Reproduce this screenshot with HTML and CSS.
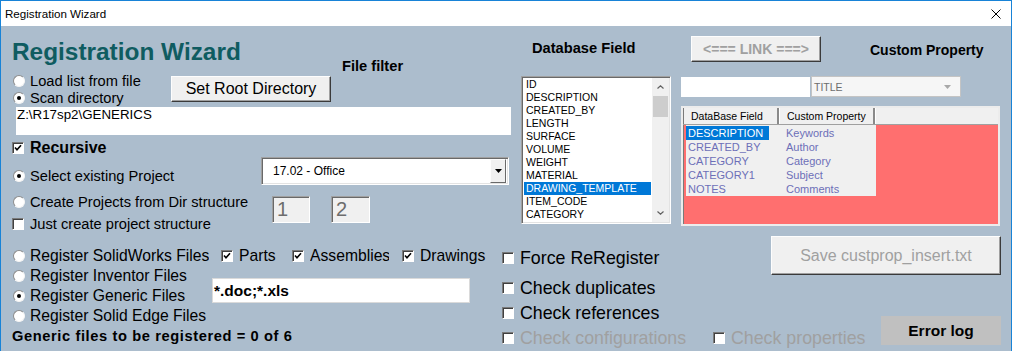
FILE: index.html
```html
<!DOCTYPE html>
<html lang="en">
<head>
    <meta charset="UTF-8">
    <title>Registration Wizard</title>
    <link rel="stylesheet" href="styles.css">
</head>
<body>

    <div class="window">

        <!-- title bar -->
        <div class="titlebar">
            <span class="title-text">Registration Wizard</span>
            <svg class="close" width="10" height="10" viewBox="0 0 10 10">
                <path d="M0.5 0.5 L9.5 9.5 M9.5 0.5 L0.5 9.5" stroke="#000" stroke-width="1"/>
            </svg>
        </div>

        <div class="form">

            <!-- upper part: source, database list, mapping -->
            <div class="top">

                <div class="col-left">
                    <div class="head-row">
                        <h1>Registration Wizard</h1>
                        <span class="label-bold filter-label">File filter</span>
                    </div>

                    <div class="source-row">
                        <div class="radio-group">
                            <label class="opt"><span class="radio"></span>Load list from file</label>
                            <label class="opt"><span class="radio on"></span>Scan directory</label>
                        </div>
                        <button class="btn btn-root">Set Root Directory</button>
                    </div>

                    <div class="path-box">Z:\R17sp2\GENERICS</div>

                    <label class="opt recursive"><span class="check on"><svg width="10" height="10" viewBox="0 0 10 10"><path d="M2 4.5 L4 6.8 L8 2.2" fill="none" stroke="#000" stroke-width="1.6"/></svg></span>Recursive</label>

                    <div class="project-row">
                        <label class="opt"><span class="radio on"></span>Select existing Project</label>
                        <div class="combo">
                            <span class="combo-text">17.02 - Office</span>
                            <span class="combo-btn"><svg width="7" height="4" viewBox="0 0 7 4"><path d="M0 0 H7 L3.5 4 Z" fill="#000"/></svg></span>
                        </div>
                    </div>

                    <div class="create-row">
                        <label class="opt"><span class="radio"></span>Create Projects from Dir structure</label>
                        <div class="numbox">1</div>
                        <div class="numbox numbox-second">2</div>
                    </div>

                    <label class="opt"><span class="check"></span>Just create project structure</label>
                </div>

                <div class="col-db">
                    <div class="label-bold db-label">Database Field</div>
                    <div class="listbox">
                        <ul class="list-items">
                            <li>ID</li>
                            <li>DESCRIPTION</li>
                            <li>CREATED_BY</li>
                            <li>LENGTH</li>
                            <li>SURFACE</li>
                            <li>VOLUME</li>
                            <li>WEIGHT</li>
                            <li>MATERIAL</li>
                            <li class="selected">DRAWING_TEMPLATE</li>
                            <li>ITEM_CODE</li>
                            <li>CATEGORY</li>
                        </ul>
                        <div class="scrollbar">
                            <div class="scroll-arrow"><svg width="7" height="4" viewBox="0 0 7 4"><path d="M0.5 3.5 L3.5 0.8 L6.5 3.5" fill="none" stroke="#606060" stroke-width="1.2"/></svg></div>
                            <div class="scroll-thumb"></div>
                            <div class="scroll-arrow scroll-down"><svg width="7" height="4" viewBox="0 0 7 4"><path d="M0.5 0.5 L3.5 3.2 L6.5 0.5" fill="none" stroke="#606060" stroke-width="1.2"/></svg></div>
                        </div>
                    </div>
                </div>

                <div class="col-right">
                    <div class="link-row">
                        <button class="btn btn-link">&lt;=== LINK ===&gt;</button>
                        <span class="label-bold custom-label">Custom Property</span>
                    </div>

                    <div class="map-row">
                        <div class="text-input"></div>
                        <div class="combo-flat">
                            <span>TITLE</span>
                            <svg width="7" height="4" viewBox="0 0 7 4"><path d="M0 0 H7 L3.5 4 Z" fill="#a8a8a8"/></svg>
                        </div>
                    </div>

                    <div class="listview">
                        <div class="lv-header">
                            <div class="lv-col lv-col-first">DataBase Field</div>
                            <div class="lv-col">Custom Property</div>
                            <div class="lv-col lv-col-rest"></div>
                        </div>
                        <div class="lv-body">
                            <div class="lv-row"><span class="lv-cell"><span class="lv-text selected">DESCRIPTION</span></span><span class="lv-cell lv-cell-second">Keywords</span></div>
                            <div class="lv-row"><span class="lv-cell"><span class="lv-text">CREATED_BY</span></span><span class="lv-cell lv-cell-second">Author</span></div>
                            <div class="lv-row"><span class="lv-cell"><span class="lv-text">CATEGORY</span></span><span class="lv-cell lv-cell-second">Category</span></div>
                            <div class="lv-row"><span class="lv-cell"><span class="lv-text">CATEGORY1</span></span><span class="lv-cell lv-cell-second">Subject</span></div>
                            <div class="lv-row"><span class="lv-cell"><span class="lv-text">NOTES</span></span><span class="lv-cell lv-cell-second">Comments</span></div>
                        </div>
                    </div>
                </div>
            </div>

            <!-- lower part: file types, options, actions -->
            <div class="bottom">

                <div class="col-register">
                    <div class="register-grid">
                        <div class="radio-stack">
                            <label class="opt big"><span class="radio"></span><span class="clip">Register SolidWorks Files</span></label>
                            <label class="opt big"><span class="radio"></span><span class="clip">Register Inventor Files</span></label>
                            <label class="opt big"><span class="radio on"></span><span class="clip">Register Generic Files</span></label>
                            <label class="opt big"><span class="radio"></span><span class="clip">Register Solid Edge Files</span></label>
                        </div>
                        <div class="types">
                            <div class="type-checks">
                                <label class="opt big type-parts"><span class="check on"><svg width="10" height="10" viewBox="0 0 10 10"><path d="M2 4.5 L4 6.8 L8 2.2" fill="none" stroke="#000" stroke-width="1.6"/></svg></span>Parts</label>
                                <label class="opt big type-asm"><span class="check on"><svg width="10" height="10" viewBox="0 0 10 10"><path d="M2 4.5 L4 6.8 L8 2.2" fill="none" stroke="#000" stroke-width="1.6"/></svg></span><span class="clip">Assemblies</span></label>
                                <label class="opt big"><span class="check on"><svg width="10" height="10" viewBox="0 0 10 10"><path d="M2 4.5 L4 6.8 L8 2.2" fill="none" stroke="#000" stroke-width="1.6"/></svg></span>Drawings</label>
                            </div>
                            <div class="filter-input">*.doc;*.xls</div>
                        </div>
                    </div>
                    <div class="summary">Generic files to be registered = 0 of 6</div>
                </div>

                <div class="col-checks">
                    <label class="opt strong"><span class="check"></span>Force ReRegister</label>
                    <label class="opt strong row-dup"><span class="check"></span>Check duplicates</label>
                    <label class="opt strong row-ref"><span class="check"></span>Check references</label>
                    <div class="check-pair">
                        <label class="opt strong disabled pair-first"><span class="check"></span>Check configurations</label>
                        <label class="opt strong disabled"><span class="check"></span>Check properties</label>
                    </div>
                </div>

                <div class="col-actions">
                    <button class="btn btn-save">Save custprop_insert.txt</button>
                    <button class="btn-error">Error log</button>
                </div>
            </div>
        </div>
    </div>

</body>
</html>
```

FILE: styles.css
```css
* {
    box-sizing: border-box;
}

body {
    margin: 0;
    background: #fff;
    font-family: "Liberation Sans", Arial, sans-serif;
    color: #000;
}

.window {
    width: 1012px;
    height: 351px;
    border: 1px solid #1883d7;
    border-bottom: none;
    background: #acbdcd;
    overflow: hidden;
    display: flex;
    flex-direction: column;
}

/* title bar */
.titlebar {
    height: 25px;
    flex-shrink: 0;
    background: #fff;
    display: flex;
    align-items: center;
    justify-content: space-between;
    padding: 0 10px 0 4px;
}

.title-text {
    font-size: 11.6px;
}

.close {
    display: block;
}

.form {
    flex: 1;
    padding-left: 11px;
}

/* shared controls */
.opt {
    display: flex;
    align-items: center;
    height: 17px;
    font-size: 14.67px;
    white-space: nowrap;
}

.radio {
    position: relative;
    flex-shrink: 0;
    width: 12px;
    height: 12px;
    margin: 0 5px 0 1px;
    border-radius: 50%;
    background: #fff;
    border: 1px solid;
    border-color: #8c8c8c #f4f4f4 #f4f4f4 #8c8c8c;
}

.radio.on::after {
    content: "";
    position: absolute;
    left: 3px;
    top: 3px;
    width: 4px;
    height: 4px;
    border-radius: 50%;
    background: #000;
}

.check {
    flex-shrink: 0;
    width: 12px;
    height: 12px;
    margin-right: 6px;
    background: #fff;
    border: 1px solid;
    border-color: #7a7a7a #fff #fff #7a7a7a;
    box-shadow: inset 1px 1px 0 #404040;
    display: flex;
    align-items: center;
    justify-content: center;
}

.check svg {
    display: block;
}

.label-bold {
    font-weight: bold;
    font-size: 14.67px;
    line-height: 17px;
    white-space: nowrap;
}

.btn {
    font-family: inherit;
    color: #000;
    background: #f0f0f0;
    border: 1px solid;
    border-color: #fdfdfd #3a3a3a #3a3a3a #fdfdfd;
    box-shadow: inset -1px -1px 0 #a0a0a0;
    padding: 0;
}

/* upper part */
.top {
    display: grid;
    grid-template-columns: 499px 150px 320px;
    column-gap: 10px;
    height: 210px;
}

.head-row {
    display: flex;
    margin-top: 12px;
    height: 34px;
}

h1 {
    margin: 0;
    flex: 0 0 330px;
    font-size: 24.4px;
    line-height: 28px;
    font-weight: bold;
    color: #0f5c61;
}

.filter-label {
    margin-top: 20px;
}

.source-row {
    display: flex;
    height: 34px;
}

.radio-group {
    width: 159px;
}

.btn-root {
    margin-top: 4px;
    width: 160px;
    height: 26px;
    font-size: 16px;
}

.path-box {
    margin: 1px 0 0 4px;
    width: 495px;
    height: 28px;
    padding-left: 1px;
    background: #fff;
    font-size: 13.33px;
    line-height: 16px;
}

.recursive {
    margin-top: 4px;
    height: 18px;
    font-size: 16px;
    font-weight: bold;
}

.project-row {
    display: flex;
    height: 32px;
}

.project-row .opt {
    width: 249px;
    margin-top: 10px;
}

.combo {
    width: 248px;
    height: 28px;
    display: flex;
    align-items: center;
    justify-content: space-between;
    background: #fff;
    border: 1px solid;
    border-color: #a0a0a0 #fff #fff #a0a0a0;
    box-shadow: inset 1px 1px 0 #696969, inset -1px -1px 0 #e3e3e3;
    padding: 1px 2px 1px 11px;
}

.combo-text {
    font-size: 12px;
}

.combo-btn {
    width: 16px;
    height: 24px;
    display: flex;
    align-items: center;
    justify-content: center;
    background: #f0f0f0;
    border: 1px solid;
    border-color: #fdfdfd #696969 #696969 #fdfdfd;
}

.combo-btn svg {
    display: block;
}

.create-row {
    display: flex;
    height: 22px;
    margin-top: 4px;
}

.create-row .opt {
    width: 260px;
}

.numbox {
    margin-top: 3px;
    width: 38px;
    height: 27px;
    padding-left: 4px;
    background: #f0f0f0;
    border: 1px solid;
    border-color: #a0a0a0 #fff #fff #a0a0a0;
    box-shadow: inset 1px 1px 0 #696969;
    color: #6d6d6d;
    font-size: 20px;
    line-height: 25px;
}

.numbox-second {
    margin-left: 21px;
    width: 39px;
}

/* database field list */
.db-label {
    height: 50px;
    padding: 14px 0 0 11px;
}

.listbox {
    height: 148px;
    display: flex;
    background: #fff;
    border: 1px solid;
    border-color: #a0a0a0 #fff #fff #a0a0a0;
    box-shadow: inset 1px 1px 0 #696969, inset -1px -1px 0 #e3e3e3;
    padding: 1px;
}

.list-items {
    list-style: none;
    margin: 0;
    padding: 0 0 0 1px;
    flex: 1;
    overflow: hidden;
    font-size: 10.5px;
    line-height: 13px;
}

.list-items li {
    padding-left: 2px;
    margin-right: 1px;
    white-space: nowrap;
}

.list-items .selected {
    background: #0078d7;
    color: #fff;
}

.scrollbar {
    width: 17px;
    background: #f0f0f0;
    display: flex;
    flex-direction: column;
}

.scroll-arrow {
    height: 18px;
    display: flex;
    align-items: center;
    justify-content: center;
}

.scroll-arrow svg {
    display: block;
}

.scroll-thumb {
    height: 21px;
    margin: 0 1px;
    background: #cdcdcd;
}

.scroll-down {
    margin-top: auto;
}

/* custom property mapping */
.link-row {
    display: flex;
    align-items: flex-start;
    height: 50px;
}

.btn-link {
    margin: 10px 0 0 10px;
    width: 130px;
    height: 26px;
    font-size: 14px;
    font-weight: bold;
    color: #a0a0a0;
}

.custom-label {
    margin: 16px 0 0 49px;
    font-size: 14px;
}

.map-row {
    display: flex;
    height: 21px;
}

.text-input {
    margin-top: 1px;
    width: 129px;
    height: 20px;
    background: #fff;
}

.combo-flat {
    margin-left: 1px;
    width: 150px;
    height: 21px;
    display: flex;
    align-items: center;
    justify-content: space-between;
    padding: 0 9px 0 2px;
    background: #f6f6f6;
    border: 1px solid #c4c4c4;
    color: #6d6d6d;
    font-size: 10.5px;
}

.combo-flat svg {
    display: block;
}

.listview {
    margin-top: 9px;
    width: 319px;
    height: 120px;
    background: #ff6f6f;
    border: 2px solid #ececec;
    box-shadow: inset 1px 1px 0 #7a7a7a;
}

.lv-header {
    display: flex;
    height: 17px;
    background: #f0f0f0;
    font-size: 10.5px;
    line-height: 16px;
    border-bottom: 1px solid #a0a0a0;
}

.lv-col {
    width: 96px;
    padding-left: 7px;
    border-right: 2px solid #8a8a8a;
    border-left: 1px solid #fff;
    white-space: nowrap;
}

.lv-col-first {
    border-left: 1px solid #7a7a7a;
}

.lv-col-rest {
    flex: 1;
    border-right: none;
}

.lv-body {
    margin-left: 3px;
    width: 190px;
    height: 71px;
    padding-top: 1px;
    background: #f0f0f0;
    font-size: 11px;
    color: #6d6fb8;
}

.lv-row {
    display: flex;
    height: 14px;
    line-height: 14px;
}

.lv-cell {
    width: 93px;
    white-space: nowrap;
}

.lv-text {
    display: inline-block;
    padding: 0 6px 0 2px;
}

.lv-text.selected {
    background: #0078d7;
    color: #fff;
}

.lv-cell-second {
    padding-left: 7px;
}

/* lower part */
.bottom {
    display: flex;
    height: 115px;
}

.col-register {
    width: 489px;
    padding-top: 10px;
}

.register-grid {
    display: flex;
}

.radio-stack {
    width: 197px;
}

.opt.big {
    height: 20px;
    font-size: 15.7px;
}

.clip {
    overflow: hidden;
}

.types {
    margin-left: 3px;
}

.type-checks {
    display: flex;
    height: 20px;
    padding-left: 9px;
}

.type-parts {
    width: 71px;
}

.type-asm {
    width: 110px;
}

.type-asm .clip {
    width: 79px;
}

.filter-input {
    margin-top: 12px;
    width: 258px;
    height: 25px;
    padding-left: 1px;
    background: #fff;
    border: 1px solid #dadada;
    font-size: 15.5px;
    font-weight: bold;
    line-height: 23px;
}

.summary {
    height: 20px;
    line-height: 20px;
    font-size: 14.67px;
    font-weight: bold;
    letter-spacing: 0.6px;
    white-space: nowrap;
}

.col-checks {
    width: 270px;
    padding-top: 12px;
}

.opt.strong {
    flex-shrink: 0;
    height: 20px;
    font-size: 17.8px;
}

.opt.strong .check {
    margin-left: 1px;
}

.row-dup {
    margin-top: 10px;
}

.row-ref {
    margin-top: 5px;
}

.check-pair {
    display: flex;
    margin-top: 5px;
}

.pair-first {
    width: 211px;
}

.disabled {
    color: #a0a0a0;
}

.col-actions {
    width: 230px;
    display: flex;
    flex-direction: column;
    align-items: flex-end;
}

.btn-save {
    width: 230px;
    height: 39px;
    font-size: 16px;
    color: #a0a0a0;
}

.btn-error {
    margin-top: 41px;
    width: 120px;
    height: 29px;
    padding: 0;
    border: none;
    background: #c0c0c0;
    font-family: inherit;
    font-size: 15.5px;
    font-weight: bold;
    color: #000;
}
```
